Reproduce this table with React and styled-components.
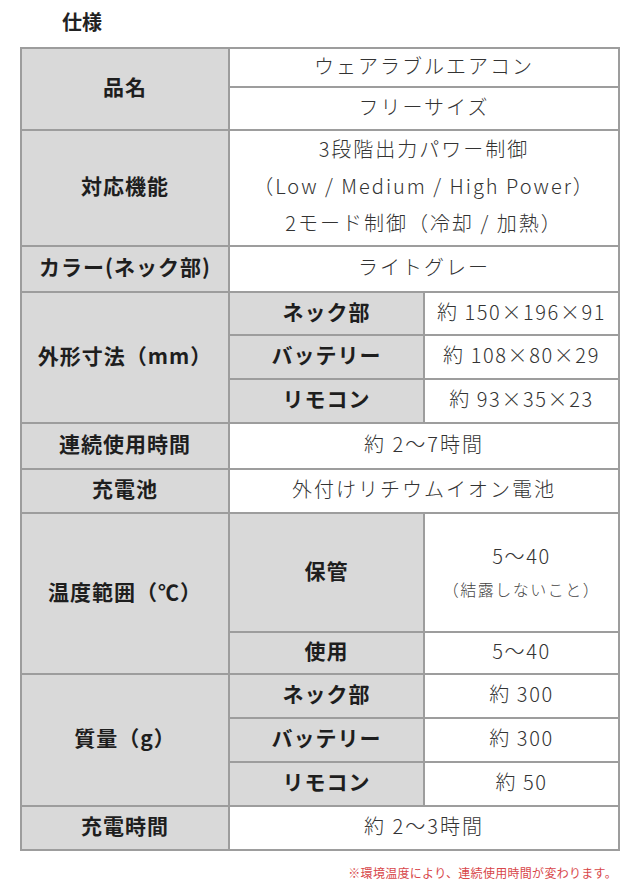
import React from 'react'
import styled, { createGlobalStyle } from 'styled-components'

const GlobalStyle = createGlobalStyle`
  body {
    margin: 0;
    background: #ffffff;
    font-family: "Noto Sans CJK JP", "Noto Sans", sans-serif;
  }
`

const Page = styled.div`
  width: 640px;
  height: 896px;
  padding: 0 20px;
  box-sizing: border-box;
`

const Title = styled.h2`
  margin: 0 0 0 42px;
  height: 47px;
  padding-top: 8px;
  box-sizing: border-box;
  font-size: 20px;
  line-height: 28px;
  font-weight: 700;
  color: #222;
`

const Table = styled.div`
  display: grid;
  width: 600px;
  box-sizing: border-box;
  grid-template-columns: 206px 193px 193px;
  grid-template-rows: 37px 41px 114px 44px 41px 42px 42px 44px 42px 117px 40px 42px 42px 42px 42px;
  gap: 2px;
  padding: 2px;
  background: #9d9d9d;
`

const Cell = styled.div`
  grid-column: ${p => p.$col} / span ${p => p.$cspan || 1};
  grid-row: ${p => p.$row} / span ${p => p.$rspan || 1};
  display: flex;
  flex-direction: column;
  align-items: center;
  justify-content: center;
  padding-bottom: 5px;
  box-sizing: border-box;
  text-align: center;
  background: ${p => (p.$head ? '#d9d9d9' : '#ffffff')};
  color: ${p => (p.$head ? '#1e1e1e' : '#333333')};
  font-size: ${p => (p.$head ? '21px' : '20px')};
  font-weight: ${p => (p.$head ? 700 : 300)};
  letter-spacing: ${p => (p.$head ? '1px' : '2px')};
  line-height: 37px;
  white-space: nowrap;
`

const Num = styled.span`
  letter-spacing: 1.6px;
`

const Note = styled.span`
  font-size: 16px;
  line-height: 30px;
  letter-spacing: 1.5px;
  color: #444;
`

const Footnote = styled.p`
  margin: 14px 3px 0 0;
  text-align: right;
  font-size: 12px;
  line-height: 16px;
  letter-spacing: 0.3px;
  color: #d8474a;
`

const rows = [
  { col: 1, row: 1, rspan: 2, head: true, text: '品名' },
  { col: 2, row: 1, cspan: 2, text: 'ウェアラブルエアコン' },
  { col: 2, row: 2, cspan: 2, text: 'フリーサイズ' },
  { col: 1, row: 3, head: true, text: '対応機能' },
  { col: 2, row: 3, cspan: 2, lines: ['3段階出力パワー制御', '（Low / Medium / High Power）', '2モード制御（冷却 / 加熱）'] },
  { col: 1, row: 4, head: true, text: 'カラー(ネック部)' },
  { col: 2, row: 4, cspan: 2, text: 'ライトグレー' },
  { col: 1, row: 5, rspan: 3, head: true, text: '外形寸法（mm）' },
  { col: 2, row: 5, head: true, text: 'ネック部' },
  { col: 3, row: 5, num: true, text: '約 150×196×91' },
  { col: 2, row: 6, head: true, text: 'バッテリー' },
  { col: 3, row: 6, num: true, text: '約 108×80×29' },
  { col: 2, row: 7, head: true, text: 'リモコン' },
  { col: 3, row: 7, num: true, text: '約 93×35×23' },
  { col: 1, row: 8, head: true, text: '連続使用時間' },
  { col: 2, row: 8, cspan: 2, text: '約 2〜7時間' },
  { col: 1, row: 9, head: true, text: '充電池' },
  { col: 2, row: 9, cspan: 2, text: '外付けリチウムイオン電池' },
  { col: 1, row: 10, rspan: 2, head: true, text: '温度範囲（℃）' },
  { col: 2, row: 10, head: true, text: '保管' },
  { col: 3, row: 10, num: true, text: '5〜40', note: '（結露しないこと）' },
  { col: 2, row: 11, head: true, text: '使用' },
  { col: 3, row: 11, num: true, text: '5〜40' },
  { col: 1, row: 12, rspan: 3, head: true, text: '質量（g）' },
  { col: 2, row: 12, head: true, text: 'ネック部' },
  { col: 3, row: 12, num: true, text: '約 300' },
  { col: 2, row: 13, head: true, text: 'バッテリー' },
  { col: 3, row: 13, num: true, text: '約 300' },
  { col: 2, row: 14, head: true, text: 'リモコン' },
  { col: 3, row: 14, num: true, text: '約 50' },
  { col: 1, row: 15, head: true, text: '充電時間' },
  { col: 2, row: 15, cspan: 2, text: '約 2〜3時間' },
]

export default function App() {
  return (
    <Page>
      <GlobalStyle />
      <Title>仕様</Title>
      <Table>
        {rows.map((r, i) => (
          <Cell key={i} $col={r.col} $row={r.row} $cspan={r.cspan} $rspan={r.rspan} $head={r.head}>
            {r.lines
              ? r.lines.map(l => <span key={l}>{l}</span>)
              : r.num
                ? <Num>{r.text}</Num>
                : <span>{r.text}</span>}
            {r.note && <Note>{r.note}</Note>}
          </Cell>
        ))}
      </Table>
      <Footnote>※環境温度により、連続使用時間が変わります。</Footnote>
    </Page>
  )
}
